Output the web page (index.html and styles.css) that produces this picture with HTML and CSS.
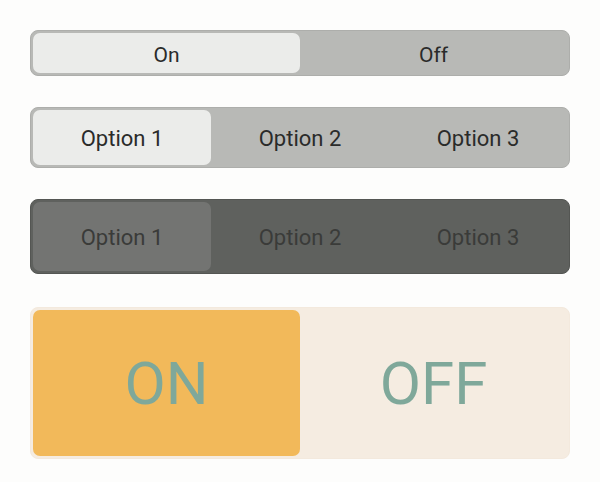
FILE: index.html
```html
<!DOCTYPE html>
<html>
<head>
<meta charset="utf-8">
<link rel="stylesheet" href="styles.css">
</head>
<body>
<div class="page">
  <div class="seg seg-light seg-s">
    <div class="opt active">On</div>
    <div class="opt">Off</div>
  </div>
  <div class="seg seg-light seg-m">
    <div class="opt active">Option 1</div>
    <div class="opt">Option 2</div>
    <div class="opt">Option 3</div>
  </div>
  <div class="seg seg-dark seg-l">
    <div class="opt active">Option 1</div>
    <div class="opt">Option 2</div>
    <div class="opt">Option 3</div>
  </div>
  <div class="seg seg-warm seg-xl">
    <div class="opt active">ON</div>
    <div class="opt">OFF</div>
  </div>
</div>
</body>
</html>
```
FILE: styles.css
```css
html, body {
  margin: 0;
  padding: 0;
  background: #fdfdfc;
}
.page {
  padding: 30px 30px 0 30px;
  display: flex;
  flex-direction: column;
  gap: 31px;
  font-family: Roboto, "Noto Sans", sans-serif;
}
.seg {
  display: flex;
  box-sizing: border-box;
  width: 540px;
  padding: 2px;
  border-radius: 8px;
}
.opt {
  flex: 1 1 0;
  display: flex;
  align-items: center;
  justify-content: center;
  border-radius: 7px;
}
.seg-light {
  background: #b8b9b6;
  border: 1px solid #adaeab;
  color: #2a2b2a;
}
.seg-light .active {
  background: #ebecea;
}
.seg-s { height: 46px; font-size: 21px; }
.seg-s .opt { padding-top: 3px; }
.seg-m { height: 61px; font-size: 22px; }
.seg-m .opt { padding-top: 1px; }
.seg-l { height: 75px; font-size: 22px; }
.seg-l .opt { padding-top: 1px; }
.seg-dark {
  background: #5f615e;
  border: 1px solid #545653;
  color: #3a3b39;
}
.seg-dark .active {
  background: #737472;
}
.seg-warm {
  background: #f5ece1;
  border: 1px solid #f3e9dd;
  color: #7fa89a;
  height: 152px;
  font-size: 60px;
  margin-top: 2px;
}
.seg-warm .active {
  background: #f2b95a;
}
```
